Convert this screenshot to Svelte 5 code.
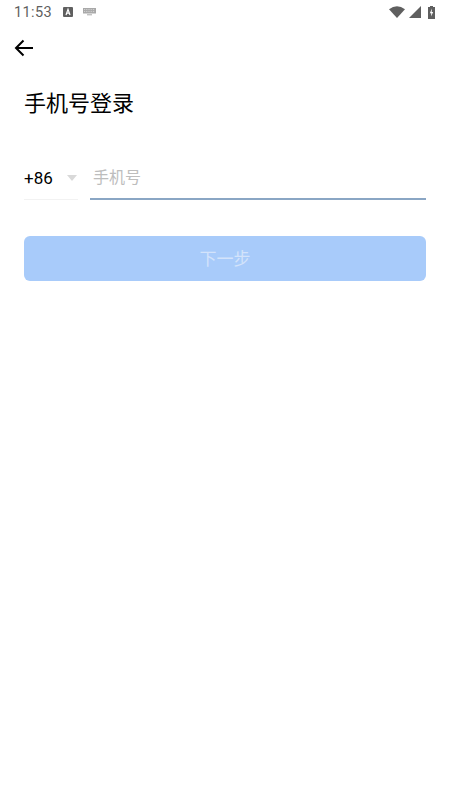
<script>
	let phone = $state('');
</script>

<div class="page">
	<div class="status-bar">
		<span class="time">11:53</span>
		<svg class="note-a" width="10" height="10" viewBox="0 0 10 10">
			<rect width="10" height="10" rx="1" fill="#5f5f5f" />
			<path d="M3 8 L5 2.4 L7 8 M3.8 6.2 H6.2" fill="none" stroke="#fff" stroke-width="1.2" />
		</svg>
		<svg class="note-kb" width="13" height="8" viewBox="0 0 13 8">
			<path d="M0 0 H13 V5.5 H0 Z" fill="#a8a8a8" />
			<path d="M1 1.6 H12 M1 3.6 H12" stroke="#e8e8e8" stroke-width="0.7" stroke-dasharray="1 0.8" />
			<path d="M4 6.8 H9" stroke="#a8a8a8" stroke-width="1" />
		</svg>
		<div class="status-right">
			<svg class="wifi" width="16" height="12" viewBox="0 0 16 12">
				<path d="M0 3.2 Q8 -2.6 16 3.2 L8 12 Z" fill="#5f5f5f" />
			</svg>
			<svg class="signal" width="12" height="12" viewBox="0 0 12 12">
				<path d="M12 0 V12 H0 Z" fill="#5f5f5f" />
			</svg>
			<svg class="battery" width="7" height="13" viewBox="0 0 7 13">
				<path d="M2 0 H5 V1 H7 V13 H0 V1 H2 Z" fill="#5f5f5f" />
				<path d="M4 2.6 L1.8 7.2 H3.3 L3 10.6 L5.2 6 H3.7 Z" fill="#fff" />
			</svg>
		</div>
	</div>

	<button class="back" aria-label="返回">
		<svg width="20" height="18" viewBox="0 0 20 18">
			<path d="M19 9 H2 M9.5 1.5 L2 9 L9.5 16.5" fill="none" stroke="#000" stroke-width="2" />
		</svg>
	</button>

	<h1>手机号登录</h1>

	<div class="form-row">
		<div class="code">
			<span>+86</span>
			<i class="caret"></i>
		</div>
		<input type="tel" placeholder="手机号" bind:value={phone} />
	</div>

	<button class="next" disabled={!phone}>下一步</button>
</div>

<style>
	:global(body) {
		background: #fff;
	}

	.page {
		height: 800px;
		display: flex;
		flex-direction: column;
		font-family: 'Roboto', 'Noto Sans CJK SC', sans-serif;
		overflow: hidden;
	}

	.status-bar {
		height: 24px;
		display: flex;
		align-items: center;
		padding: 0 15px 0 14px;
		box-sizing: border-box;
	}

	.time {
		font-size: 14.5px;
		color: #5f5f5f;
		letter-spacing: 0.4px;
		padding-top: 1px;
	}

	.note-a {
		margin-left: 11px;
	}

	.note-kb {
		margin-left: 10px;
	}

	.status-right {
		margin-left: auto;
		display: flex;
		align-items: center;
		gap: 3px;
	}

	.wifi {
		margin-right: 1px;
	}

	.battery {
		margin-left: 4px;
	}

	.back {
		align-self: flex-start;
		margin: 15px 0 0 14px;
		padding: 0;
		height: 18px;
		background: none;
		border: none;
		display: flex;
	}

	h1 {
		margin: 31px 0 0 24px;
		font-size: 22px;
		line-height: 32px;
		font-weight: 400;
		color: #000;
	}

	.form-row {
		display: flex;
		margin: 36px 24px 0;
		gap: 12px;
		height: 44px;
	}

	.code {
		width: 54px;
		display: flex;
		align-items: center;
		justify-content: space-between;
		box-sizing: border-box;
		padding-right: 1px;
		border-bottom: 1px solid #f2f2f2;
		font-size: 17px;
		color: #000;
	}

	.caret {
		width: 0;
		height: 0;
		border-left: 5.5px solid transparent;
		border-right: 5.5px solid transparent;
		border-top: 6px solid #d9d9d9;
	}

	input {
		flex: 1;
		min-width: 0;
		box-sizing: border-box;
		border: none;
		border-bottom: 2px solid #8aa6c4;
		outline: none;
		padding: 0 0 0 3px;
		font: inherit;
		font-size: 16px;
		color: #000;
		background: none;
	}

	input::placeholder {
		color: #bdbdbd;
	}

	.next {
		margin: 36px 24px 0;
		height: 45px;
		padding: 0 0 2px;
		border: none;
		border-radius: 6px;
		background: #a8cbfa;
		color: #d3e3fb;
		font: inherit;
		font-size: 17px;
	}
</style>
